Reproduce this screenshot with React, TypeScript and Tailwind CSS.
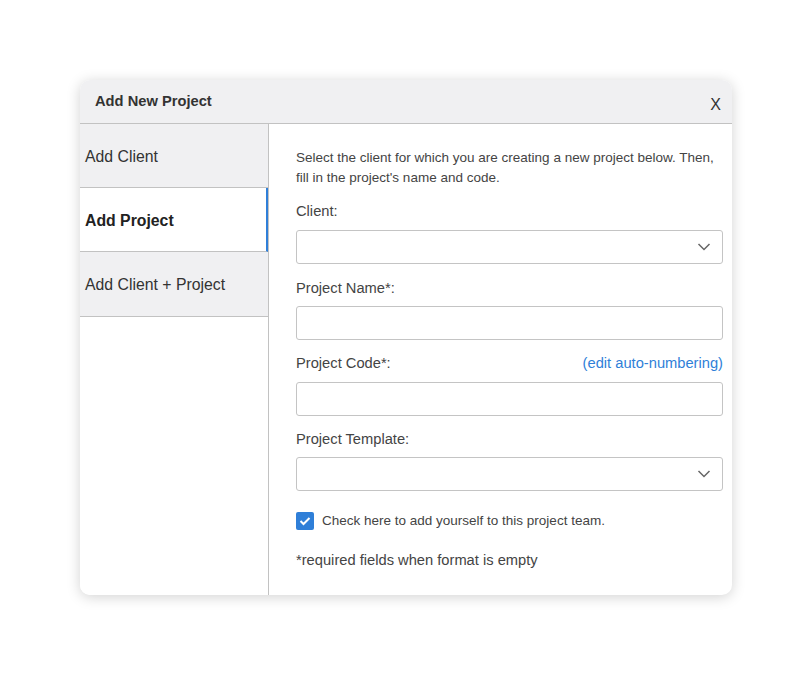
import React from "react";

function Chevron() {
  return (
    <svg width="14" height="9" viewBox="0 0 14 9" className="absolute right-[11px] top-1/2 -translate-y-1/2">
      <path d="M1.5 1.5 L7 7 L12.5 1.5" fill="none" stroke="#666" strokeWidth="1.5" />
    </svg>
  );
}

function Select() {
  return <div className="relative mt-[9px] h-[34px] rounded-[3px] border border-[#c4c4c4] bg-white"><Chevron /></div>;
}

function Input() {
  return <div className="mt-[9px] h-[34px] rounded-[3px] border border-[#c4c4c4] bg-white" />;
}

export default function App() {
  return (
    <div className="min-h-[675px] w-[812px] bg-white pl-[80px] pt-[80px] font-['Liberation_Sans',Arial,sans-serif]">
      <div className="flex h-[515px] w-[652px] flex-col overflow-hidden rounded-[10px] bg-white shadow-[0_2px_14px_rgba(0,0,0,0.18)]">
        <div className="flex h-[44px] shrink-0 items-center justify-between border-b border-[#c2c2c2] bg-[#f0f0f2] pl-[15px] pr-[11px]">
          <span className="text-[14.7px] font-bold text-[#333]">Add New Project</span>
          <span className="mt-[6px] text-[16px] text-[#333]">X</span>
        </div>
        <div className="flex min-h-0 flex-1">
          <div className="w-[189px] shrink-0 border-r border-[#c2c2c2] bg-white">
            <div className="flex h-[64px] items-center border-b border-[#c2c2c2] bg-[#f0f0f2] pl-[5px] pt-[2px] text-[15.8px] text-[#333]">Add Client</div>
            <div className="flex h-[64px] items-center border-b border-r-2 border-b-[#c2c2c2] border-r-[#2f7fd8] bg-white pl-[5px] pt-[2px] text-[15.8px] font-bold text-[#222]">Add Project</div>
            <div className="flex h-[65px] items-center border-b border-[#c2c2c2] bg-[#f0f0f2] pl-[5px] pt-[1px] text-[15.8px] text-[#333]">Add Client + Project</div>
          </div>
          <div className="flex-1 pl-[27px] pr-[9px] pt-[24px]">
            <p className="text-[13.5px] leading-[20px] text-[#444]">
              Select the client for which you are creating a new project below. Then, fill in the project's name and code.
            </p>
            <div className="mt-[13px] text-[14.7px] leading-[20px] text-[#444]">Client:</div>
            <Select />
            <div className="mt-[14px] text-[14.7px] leading-[20px] text-[#444]">Project Name*:</div>
            <div className="mt-[-1px]"><Input /></div>
            <div className="mt-[13px] flex justify-between text-[14.7px] leading-[20px]">
              <span className="text-[#444]">Project Code*:</span>
              <span className="text-[#2f7fd8]">(edit auto-numbering)</span>
            </div>
            <Input />
            <div className="mt-[13px] text-[14.7px] leading-[20px] text-[#444]">Project Template:</div>
            <div className="mt-[-1px]"><Select /></div>
            <div className="mt-[20px] flex items-center gap-[8px]">
              <div className="flex h-[18px] w-[18px] items-center justify-center rounded-[2px] bg-[#2f7fd8]">
                <svg width="12" height="10" viewBox="0 0 12 10">
                  <path d="M1.5 5 L4.5 8 L10.5 2" fill="none" stroke="white" strokeWidth="2" />
                </svg>
              </div>
              <span className="text-[13.5px] text-[#444]">Check here to add yourself to this project team.</span>
            </div>
            <div className="mt-[18px] text-[14.7px] text-[#444]">*required fields when format is empty</div>
          </div>
        </div>
      </div>
    </div>
  );
}
